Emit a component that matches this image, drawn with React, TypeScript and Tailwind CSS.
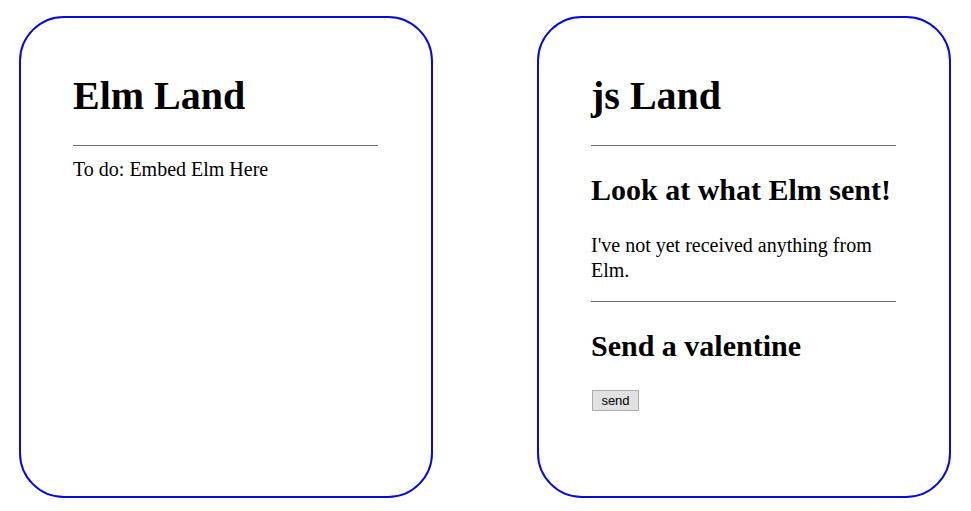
export default function App() {
    return (
        <div className="min-h-[511px] bg-white pl-[19px] pt-[16px] font-['Liberation_Serif',serif] text-black">
            <div className="flex gap-[104px]">
                {/* Elm side */}
                <div className="h-[482px] w-[414px] rounded-[45px] border-2 border-[#0a0ad8] pl-[52px] pr-[53px] pt-[55px]">
                    <h1 className="text-[40px] font-bold leading-[46px]">Elm Land</h1>
                    <hr className="mt-[26px] mb-[12px] border-t border-[#707070]" />
                    <p className="text-[20px] leading-[23px]">To do: Embed Elm Here</p>
                </div>

                {/* js side */}
                <div className="h-[482px] w-[414px] rounded-[45px] border-2 border-[#0a0ad8] pl-[52px] pr-[53px] pt-[55px]">
                    <h1 className="text-[40px] font-bold leading-[46px]">js Land</h1>
                    <hr className="mt-[26px] border-t border-[#707070]" />
                    <h2 className="mt-[26px] text-[30px] font-bold leading-[35px]">Look at what Elm sent!</h2>
                    <p className="mt-[26px] text-[20px] leading-[25px]">I've not yet received anything from Elm.</p>
                    <hr className="mt-[18px] border-t border-[#707070]" />
                    <h2 className="mt-[26px] text-[30px] font-bold leading-[35px]">Send a valentine</h2>
                    <button className="mt-[27px] ml-px h-[21px] w-[47px] border border-[#adadad] bg-[#e1e1e1] font-['Liberation_Sans',sans-serif] text-[13px] leading-none text-black">
                        send
                    </button>
                </div>
            </div>
        </div>
    );
}
